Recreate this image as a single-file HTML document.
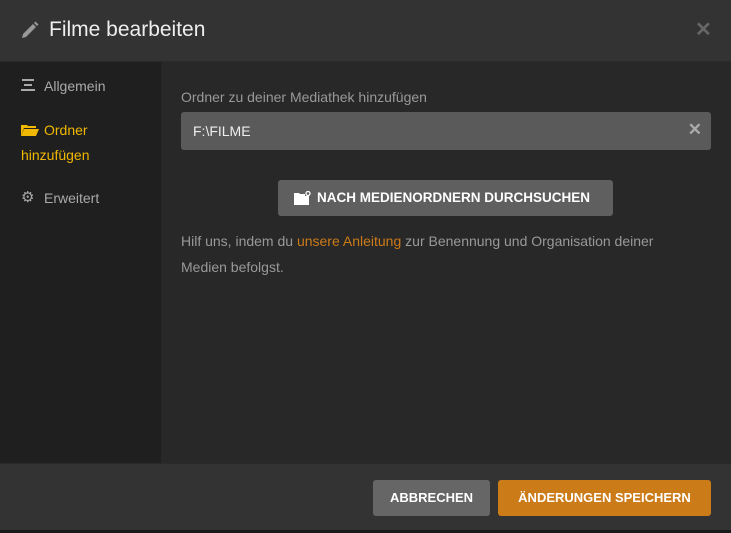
<!DOCTYPE html>
<html><head><meta charset="utf-8"><style>
*{margin:0;padding:0;box-sizing:border-box}
body{width:731px;height:533px;background:#1a1a1a;font-family:"Liberation Sans",sans-serif;position:relative;overflow:hidden}
.hdr{position:absolute;left:0;top:0;width:731px;height:62px;background:#333;border-bottom:1px solid #2a2a2a}
.title{position:absolute;left:49px;top:18px;font-size:21px;color:#eee}
.close{position:absolute;left:695px;top:17px;font-size:20px;color:#666;font-weight:bold}
.side{position:absolute;left:0;top:62px;width:161px;height:401px;background:#1f1f1f}
.main{position:absolute;left:161px;top:62px;width:570px;height:401px;background:#282828}
.si{position:absolute;font-size:14px;color:#aaa}
.ftr{position:absolute;left:0;top:463px;width:731px;height:67px;background:#333;border-top:1px solid #2a2a2a}
.btn{position:absolute;height:36px;border-radius:3px;color:#fff;font-weight:bold;font-size:13px;text-align:center;line-height:36px}
</style></head><body>
<div class="hdr">
<svg style="position:absolute;left:20px;top:21px" width="19" height="19" viewBox="0 0 19 19"><path d="M2 17 L3 13 L13 3 L16 6 L6 16 Z" fill="#999"/><path d="M14 2 L15.5 0.5 L18.5 3.5 L17 5 Z" fill="#999"/></svg>
<div class="title">Filme bearbeiten</div>
<div class="close">✕</div>
</div>
<div class="side">
<svg style="position:absolute;left:21px;top:17px" width="14" height="12"><rect x="1" y="0" width="12" height="2" fill="#aaa"/><rect x="3" y="5" width="8" height="2" fill="#aaa"/><rect x="0" y="10" width="14" height="2" fill="#aaa"/></svg>
<div class="si" style="left:44px;top:16px">Allgemein</div>
<svg style="position:absolute;left:21px;top:62px" width="18" height="12"><path d="M0 1 H6 L7 2 H15 V4 H3 L0 12 Z" fill="#f0b800"/><path d="M3 5 H18 L15 12 H0 Z" fill="#f0b800"/></svg>
<div class="si" style="left:44px;top:60px;color:#f0b800">Ordner</div>
<div class="si" style="left:21px;top:85px;color:#f0b800">hinzufügen</div>
<div class="si" style="left:21px;top:126px;font-size:15px">⚙</div>
<div class="si" style="left:44px;top:128px">Erweitert</div>
</div>
<div class="main">
<div style="position:absolute;left:20px;top:27px;font-size:14px;color:#999">Ordner zu deiner Mediathek hinzufügen</div>
<div style="position:absolute;left:20px;top:50px;width:530px;height:38px;background:#5a5a5a;border-radius:3px">
<div style="position:absolute;left:12px;top:11px;font-size:14px;color:#eee">F:\FILME</div>
<div style="position:absolute;right:9px;top:8px;font-size:17px;color:#aaa;font-weight:bold">✕</div>
</div>
<div class="btn" style="left:117px;top:118px;width:335px;height:36px;background:#5f5f5f;font-size:13.5px">
<svg style="position:absolute;left:16px;top:11px" width="17" height="14"><path d="M0 2 H5 L6 3 H11 V14 H0 Z" fill="#fff"/><rect x="0" y="5" width="15" height="9" fill="#fff"/><circle cx="14" cy="2.5" r="2" fill="none" stroke="#fff" stroke-width="1.3"/></svg>
<span style="position:absolute;left:39px">NACH MEDIENORDNERN DURCHSUCHEN</span></div>
<div style="position:absolute;left:20px;top:166px;width:510px;font-size:14px;color:#999;line-height:26px">Hilf uns, indem du <span style="color:#cc7b19">unsere Anleitung</span> zur Benennung und Organisation deiner Medien befolgst.</div>
</div>
<div class="ftr">
<div class="btn" style="left:373px;top:16px;width:117px;background:#666">ABBRECHEN</div>
<div class="btn" style="left:498px;top:16px;width:213px;background:#cc7b19">ÄNDERUNGEN SPEICHERN</div>
</div>
</body></html>
